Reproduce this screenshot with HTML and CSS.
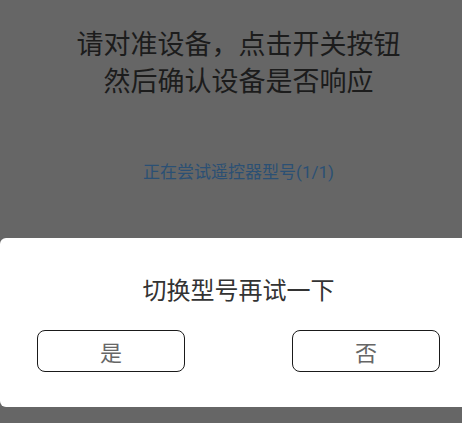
FILE: index.html
```html
<!DOCTYPE html>
<html lang="zh-CN">
<head>
	<meta charset="UTF-8" />
	<meta name="viewport" content="width=device-width, initial-scale=1.0"/>
	<title>遥控器匹配</title>
	<link rel="stylesheet" href="styles.css">
</head>
<body>
<div class="screen">
	<div class="instructions">
		<p class="title">请对准设备，点击开关按钮<br>然后确认设备是否响应</p>
		<p class="status">正在尝试遥控器型号(1/1)</p>
	</div>
	<div class="dialog">
		<p class="dialog-title">切换型号再试一下</p>
		<div class="dialog-buttons">
			<button class="dialog-button">是</button>
			<button class="dialog-button">否</button>
		</div>
	</div>
</div>
</body>
</html>
```

FILE: styles.css
```css
body, html {
	margin: 0;
	height: 100%;
	overflow: hidden;
	font-family: Roboto, "Noto Sans CJK SC", sans-serif;
	background-color: #666666;
}
.screen {
	width: 477px;
	height: 423px;
	display: flex;
	flex-direction: column;
}
.instructions {
	text-align: center;
	padding-top: 27px;
}
.title {
	margin: 0;
	font-size: 27px;
	line-height: 37px;
	color: #1c1c1c;
}
.status {
	margin: 60px 0 0;
	font-size: 17px;
	line-height: 22px;
	color: #2b5074;
}
.dialog {
	margin-top: 55px;
	width: 477px;
	height: 169px;
	box-sizing: border-box;
	background-color: #ffffff;
	border-radius: 6px;
	padding: 0 37px;
}
.dialog-title {
	margin: 0;
	padding-top: 38px;
	text-align: center;
	font-size: 24px;
	line-height: 30px;
	color: #333333;
}
.dialog-buttons {
	display: flex;
	justify-content: space-between;
	margin-top: 24px;
}
.dialog-button {
	width: 148px;
	height: 42px;
	padding: 0;
	font-family: inherit;
	font-size: 22px;
	color: #666666;
	background-color: #ffffff;
	border: 1px solid #1a1a1a;
	border-radius: 8px;
}
```
